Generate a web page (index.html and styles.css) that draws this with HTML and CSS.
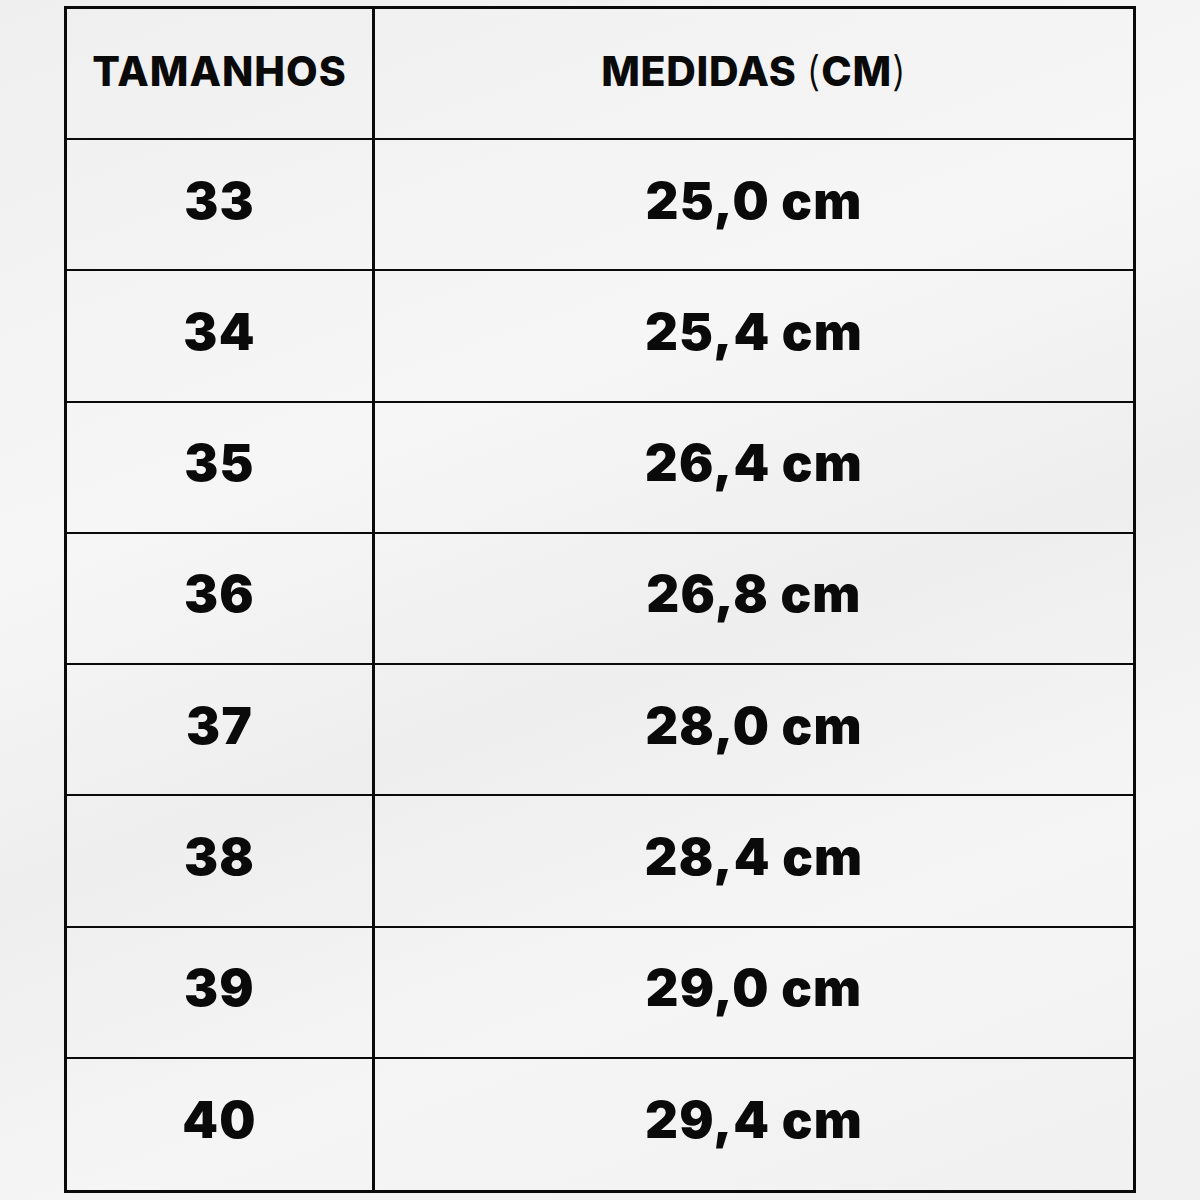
FILE: index.html
```html
<!DOCTYPE html>
<html lang="pt">
<head>
<meta charset="utf-8">
<title>Tabela de medidas</title>
<link rel="stylesheet" href="styles.css">
</head>
<body>
<div class="sheet">
  <div class="chart">
    <div class="cell head left">TAMANHOS</div>
    <div class="cell head right">MEDIDAS&nbsp;<span class="paren">(</span>CM<span class="paren">)</span></div>
    <div class="cell left">33</div><div class="cell right">25,0 cm</div>
    <div class="cell left">34</div><div class="cell right">25,4 cm</div>
    <div class="cell left">35</div><div class="cell right">26,4 cm</div>
    <div class="cell left">36</div><div class="cell right">26,8 cm</div>
    <div class="cell left">37</div><div class="cell right">28,0 cm</div>
    <div class="cell left">38</div><div class="cell right">28,4 cm</div>
    <div class="cell left">39</div><div class="cell right">29,0 cm</div>
    <div class="cell left last">40</div><div class="cell right last">29,4 cm</div>
  </div>
</div>
</body>
</html>
```
FILE: styles.css
```css
html, body {
  margin: 0;
  padding: 0;
}
body {
  width: 1200px;
  height: 1200px;
  background: linear-gradient(160deg, #efefef 0%, #f6f6f6 35%, #eeeeee 55%, #f5f5f5 75%, #f0f0f0 100%);
  font-family: Inter, "DejaVu Sans", sans-serif;
  color: #0a0a0a;
}
.sheet {
  padding: 6px 0 0 64px;
}
.chart {
  box-sizing: border-box;
  width: 1072px;
  height: 1187px;
  border: 3px solid #0a0a0a;
  display: grid;
  grid-template-columns: 308px 1fr;
  grid-template-rows: repeat(9, 1fr);
}
.cell {
  box-sizing: border-box;
  border-bottom: 2px solid #0a0a0a;
  display: flex;
  align-items: center;
  justify-content: center;
  font-weight: 900;
  font-size: 51px;
  letter-spacing: 1.2px;
  padding-bottom: 9px;
  white-space: pre;
}
.cell.left {
  border-right: 3px solid #0a0a0a;
}
.cell.last {
  border-bottom: none;
}
.cell.head {
  font-size: 41px;
  font-weight: 850;
  letter-spacing: 1px;
  padding-bottom: 6px;
}
.cell.head.right {
  letter-spacing: 0.7px;
}
.paren {
  font-weight: 300;
}
```
